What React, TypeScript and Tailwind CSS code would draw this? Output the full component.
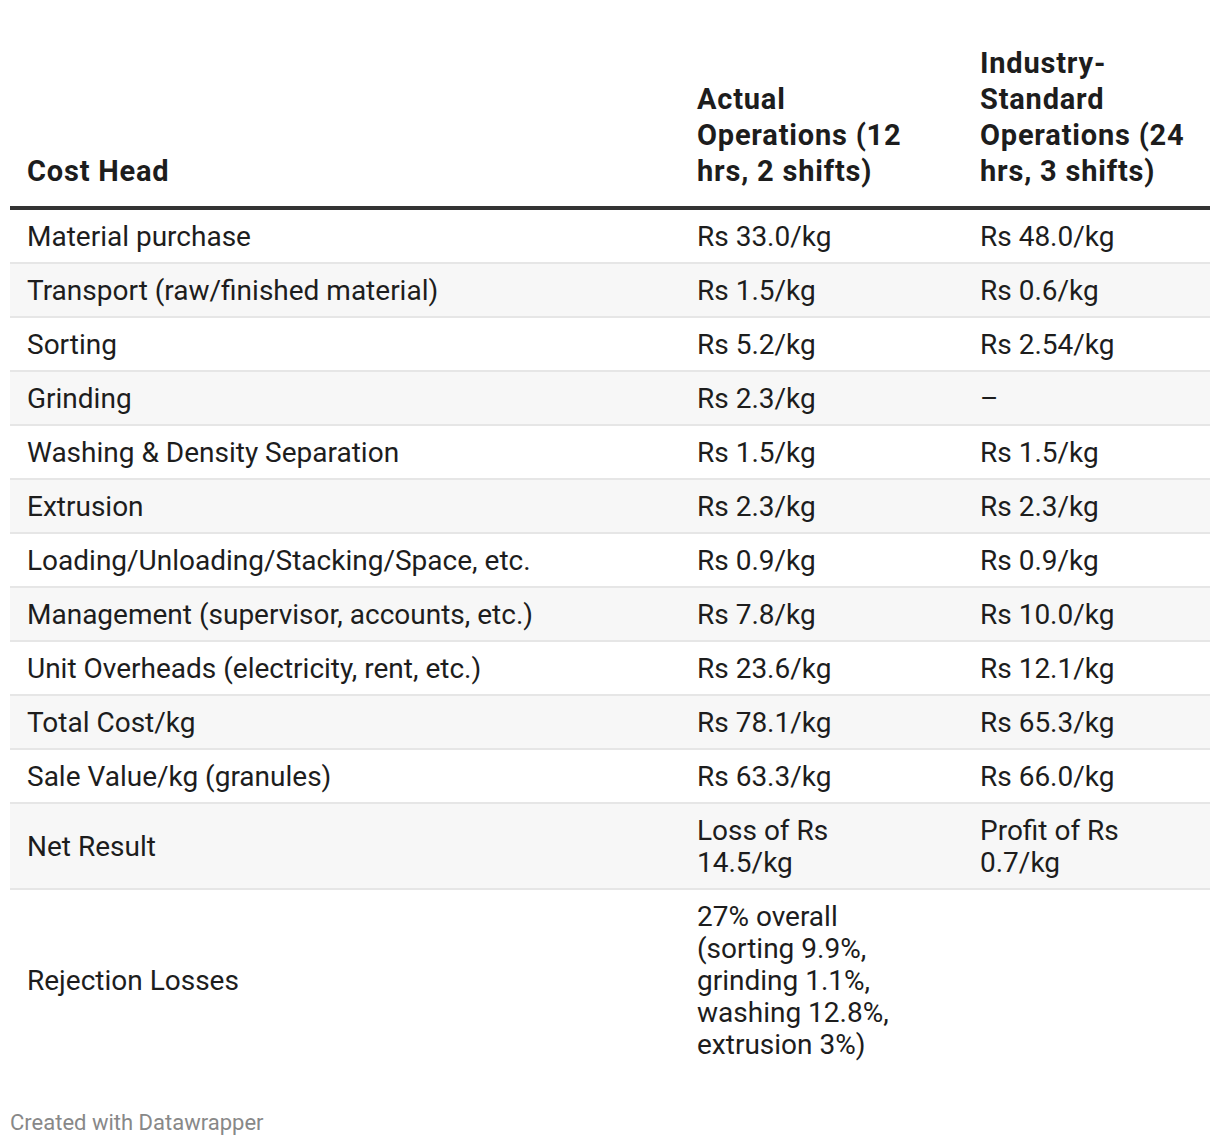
import React from "react";

const rows: [string, string, string][] = [
  ["Material purchase", "Rs 33.0/kg", "Rs 48.0/kg"],
  ["Transport (raw/finished material)", "Rs 1.5/kg", "Rs 0.6/kg"],
  ["Sorting", "Rs 5.2/kg", "Rs 2.54/kg"],
  ["Grinding", "Rs 2.3/kg", "–"],
  ["Washing & Density Separation", "Rs 1.5/kg", "Rs 1.5/kg"],
  ["Extrusion", "Rs 2.3/kg", "Rs 2.3/kg"],
  ["Loading/Unloading/Stacking/Space, etc.", "Rs 0.9/kg", "Rs 0.9/kg"],
  ["Management (supervisor, accounts, etc.)", "Rs 7.8/kg", "Rs 10.0/kg"],
  ["Unit Overheads (electricity, rent, etc.)", "Rs 23.6/kg", "Rs 12.1/kg"],
  ["Total Cost/kg", "Rs 78.1/kg", "Rs 65.3/kg"],
  ["Sale Value/kg (granules)", "Rs 63.3/kg", "Rs 66.0/kg"],
  ["Net Result", "Loss of Rs 14.5/kg", "Profit of Rs 0.7/kg"],
  [
    "Rejection Losses",
    "27% overall (sorting 9.9%, grinding 1.1%, washing 12.8%, extrusion 3%)",
    "",
  ],
];

export default function App() {
  return (
    <div
      className="w-[1220px] min-h-[1146px] bg-white px-[10px] pt-[35px] text-[#1d1d1d]"
      style={{ fontFamily: "Roboto, 'Noto Sans', Arial, sans-serif" }}
    >
      <table className="w-[1200px] table-fixed border-collapse">
        <colgroup>
          <col className="w-[670px]" />
          <col className="w-[283px]" />
          <col className="w-[247px]" />
        </colgroup>
        <thead>
          <tr className="border-b-[4px] border-[#333333]">
            <th className="pl-[17px] pr-[17px] pt-[10px] pb-[17px] text-left align-bottom text-[29px] leading-[36px] tracking-[0.8px] font-bold">
              Cost Head
            </th>
            <th className="pl-[17px] pr-[51px] pt-[10px] pb-[17px] text-left align-bottom text-[29px] leading-[36px] tracking-[0.8px] font-bold">
              Actual Operations (12 hrs, 2 shifts)
            </th>
            <th className="pl-[17px] pr-[15px] pt-[10px] pb-[17px] text-left align-bottom text-[29px] leading-[36px] tracking-[0.8px] font-bold">
              Industry-Standard Operations (24 hrs, 3 shifts)
            </th>
          </tr>
        </thead>
        <tbody>
          {rows.map((r, i) => (
            <tr
              key={i}
              className={
                (i % 2 === 1 ? "bg-[#f7f7f7] " : "bg-white ") +
                (i === rows.length - 1 ? "" : "border-b-[2px] border-[#e6e6e6]")
              }
            >
              <td className="pl-[17px] pr-[17px] pt-[11px] pb-[9px] align-middle text-[28px] leading-[32px]">
                {r[0]}
              </td>
              <td className="pl-[17px] pr-[51px] pt-[11px] pb-[9px] align-middle text-[28px] leading-[32px]">
                {r[1]}
              </td>
              <td className="pl-[17px] pr-[15px] pt-[11px] pb-[9px] align-middle text-[28px] leading-[32px]">
                {r[2]}
              </td>
            </tr>
          ))}
        </tbody>
      </table>
      <div className="mt-[41px] text-[22px] leading-[24px] text-[#888888]">
        Created with Datawrapper
      </div>
    </div>
  );
}
